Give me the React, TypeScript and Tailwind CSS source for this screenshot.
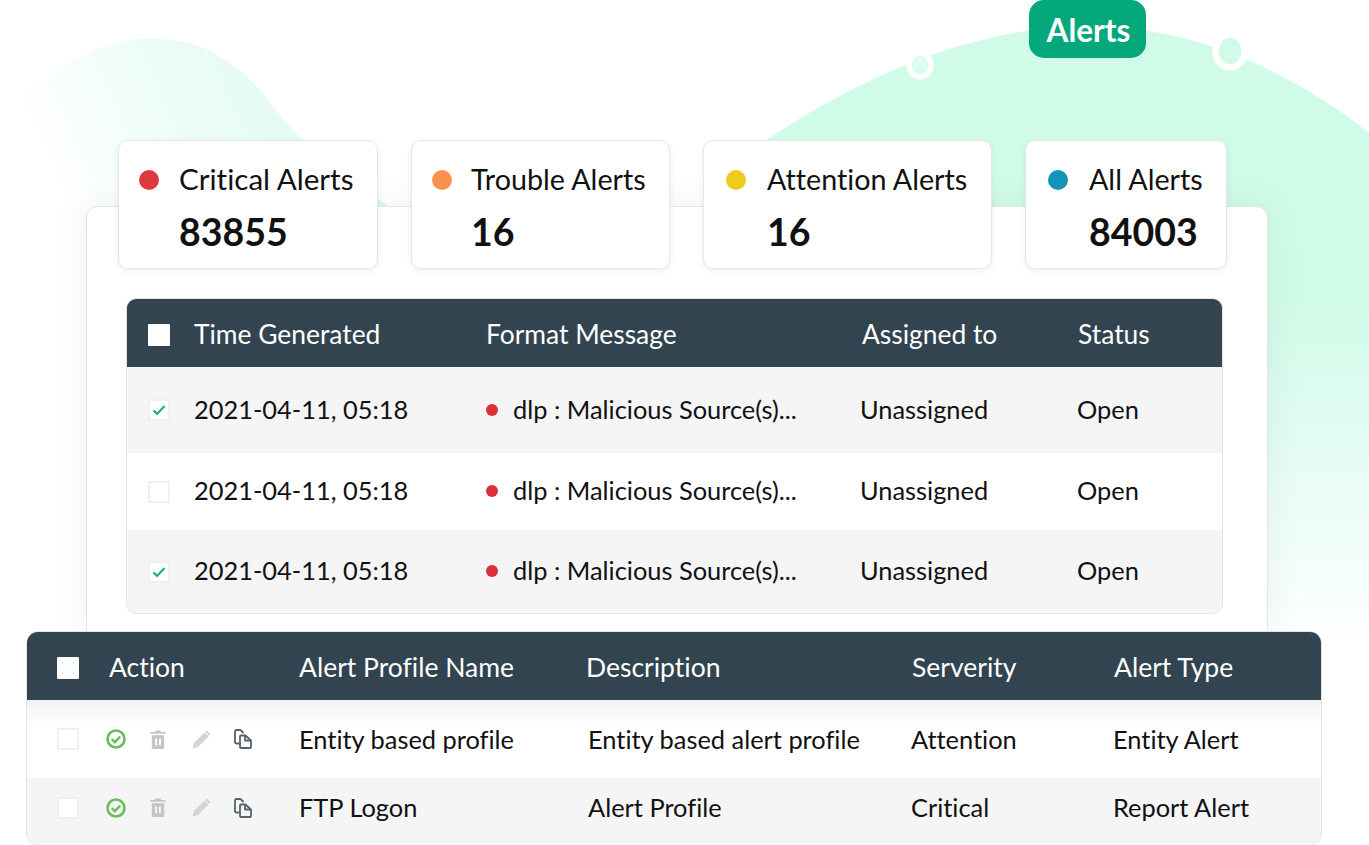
const statCards = [
  { label: "Critical Alerts", value: "83855", dot: "bg-[#dc3a3e]", width: "w-[260px]", pad: "pl-[20px]", gap: "gap-[20px]", size: "text-[29.6px]" },
  { label: "Trouble Alerts", value: "16", dot: "bg-[#fb914f]", width: "w-[259px]", pad: "pl-[20px]", gap: "gap-[19px]", size: "text-[28.7px]" },
  { label: "Attention Alerts", value: "16", dot: "bg-[#efcb20]", width: "w-[289px]", pad: "pl-[22px]", gap: "gap-[21px]", size: "text-[28.7px]" },
  { label: "All Alerts", value: "84003", dot: "bg-[#1294b8]", width: "w-[202px]", pad: "pl-[22px]", gap: "gap-[21px]", size: "text-[28.7px]" },
];

const alertRows = [
  { checked: true, bg: "bg-[#f5f5f5]", height: "h-[86px]" },
  { checked: false, bg: "bg-white", height: "h-[77px]" },
  { checked: true, bg: "bg-[#f5f5f5]", height: "h-[83px]" },
];

const profileRows = [
  { name: "Entity based profile", desc: "Entity based alert profile", severity: "Attention", type: "Entity Alert", bg: "bg-[linear-gradient(#f1f1f1,#ffffff_32%)]", height: "h-[78px]" },
  { name: "FTP Logon", desc: "Alert Profile", severity: "Critical", type: "Report Alert", bg: "bg-[#f5f5f5] pb-[8px]", height: "h-[67px]" },
];

const CheckCircleIcon = () => (
  <svg width="20" height="20" viewBox="0 0 20 20" fill="none" stroke="#6cbb5e">
    <circle cx="10" cy="10" r="8.5" strokeWidth="2.6" />
    <path d="M5.8 10.2l3 3 5.4-5.6" strokeWidth="2.4" />
  </svg>
);

const TrashIcon = () => (
  <svg width="16" height="19" viewBox="0 0 16 20" fill="#c4c6c6">
    <path d="M5.5 0.5h5l.6 1.5H16v2H0V2h4.9z" />
    <path d="M1.5 5.5h13V19a1 1 0 0 1-1 1h-11a1 1 0 0 1-1-1zM5 9v7h2V9zm4 0v7h2V9z" fillRule="evenodd" />
  </svg>
);

const PencilIcon = () => (
  <svg width="19" height="19" viewBox="0 0 19 19" fill="#d2d4d4">
    <path d="M0.5 18.5l1.5-5.5L12.5 2.5l4 4L6 17z" />
    <path d="M14 1l1-.6 3.5 3.5-.6 1.2-1 .6-3.9-3.9z" />
  </svg>
);

const CopyIcon = () => (
  <svg width="18" height="20" viewBox="0 0 18 20" fill="none" stroke="#54636c" strokeWidth="1.8" strokeLinejoin="round">
    <path d="M5 14.5H2.5a1.5 1.5 0 0 1-1.5-1.5V2.5A1.5 1.5 0 0 1 2.5 1h4l3 3" />
    <path d="M6 7.5a1 1 0 0 1 1-1h4.5L17 11.5v6.5a1 1 0 0 1-1 1H7a1 1 0 0 1-1-1z" />
    <path d="M11 6.5v5h6" />
  </svg>
);

const TickIcon = () => (
  <svg width="14" height="12" viewBox="0 0 14 12" fill="none" stroke="#1fb466" strokeWidth="2.2">
    <path d="M1.5 6.5l3.6 3.4 7.4-8" />
  </svg>
);

const Backdrop = () => (
  <svg className="absolute left-0 top-0" width="1369" height="845" viewBox="0 0 1369 845">
    <defs>
      <linearGradient id="leftBlob" x1="0.85" y1="0.2" x2="0" y2="0.45">
        <stop offset="0" stopColor="#dffbee" />
        <stop offset="0.5" stopColor="#eefdf7" />
        <stop offset="0.9" stopColor="#ffffff" />
      </linearGradient>
      <linearGradient id="hill" x1="0" y1="0" x2="0" y2="1">
        <stop offset="0" stopColor="#d1fbe9" />
        <stop offset="0.45" stopColor="#d1fbe9" />
        <stop offset="1" stopColor="#ffffff" />
      </linearGradient>
    </defs>
    <path d="M0 125C30 85 90 38 150 38C205 38 240 65 268 100C285 122 320 165 395 210L395 300L0 300Z" fill="url(#leftBlob)" />
    <path d="M745 155C850 80 970 26 1090 26C1190 26 1290 70 1369 133L1369 650L745 650Z" fill="url(#hill)" />
    <ellipse cx="920" cy="65" rx="11" ry="12" fill="#dcfcef" stroke="white" strokeWidth="5" />
    <ellipse cx="1230" cy="51" rx="14.5" ry="16.5" fill="#d1fbe9" stroke="white" strokeWidth="6.5" />
  </svg>
);

const TableHeadBox = () => <span className="block w-[22px] h-[22px] bg-white rounded-[1px]" />;

const RowBox = ({ checked }: { checked?: boolean }) => (
  <span className="flex items-center justify-center w-[22px] h-[22px] bg-white border-2 border-[#f0f0f0]">
    {checked && <TickIcon />}
  </span>
);

const App = () => {
  return (
    <div className="relative w-[1369px] h-[845px] overflow-hidden bg-white font-['Lato','Noto_Sans',sans-serif] [font-variant-ligatures:none] text-[#111]">
      <Backdrop />

      <div className="relative pt-[140px]">
        {/* stat cards sit over the top edge of the panel */}
        <div className="relative z-10 flex gap-[33px] ml-[118px]">
          {statCards.map((card) => (
            <div
              key={card.label}
              className={`${card.width} ${card.pad} ${card.gap} h-[129px] flex bg-white border border-[#e6e8e8] rounded-[10px] shadow-[0_2px_6px_rgba(0,0,0,0.07)]`}
            >
              <span className={`${card.dot} w-[20px] h-[20px] rounded-full mt-[29px] shrink-0`} />
              <div>
                <div className={`${card.size} mt-[19px] leading-[38px]`}>{card.label}</div>
                <div className="mt-[12px] text-[37.5px] leading-[44px] font-bold">{card.value}</div>
              </div>
            </div>
          ))}
        </div>

        <div className="-mt-[63px] ml-[86px] w-[1182px] h-[434px] pt-[91px] pl-[39px] bg-white border border-[#e2e6e6] rounded-[12px] shadow-[0_0_40px_rgba(0,0,0,0.06)]">
          <div className="w-[1097px] border border-[#e4e6e6] rounded-[10px] overflow-hidden">
            <div className="grid grid-cols-[67px_292px_376px_216px_1fr] items-center h-[68px] pt-[4px] bg-[#32444f] text-white text-[26.4px]">
              <span className="pl-[21px]"><TableHeadBox /></span>
              <span>Time Generated</span>
              <span>Format Message</span>
              <span>Assigned to</span>
              <span>Status</span>
            </div>
            {alertRows.map((row, i) => (
              <div key={i} className={`${row.bg} ${row.height} grid grid-cols-[67px_292px_376px_216px_1fr] items-center text-[25.4px]`}>
                <span className="pl-[21px]"><RowBox checked={row.checked} /></span>
                <span className="pb-[2px]">2021-04-11, 05:18</span>
                <span className="flex items-center gap-[15px]">
                  <span className="w-[12px] h-[12px] rounded-full bg-[#dc2f38]" />
                  <span className="pb-[2px]">dlp : Malicious Source(s)...</span>
                </span>
                <span className="-ml-[2px] pb-[2px]">Unassigned</span>
                <span className="-ml-[1px] pb-[2px]">Open</span>
              </div>
            ))}
          </div>
        </div>

        <div className="relative z-10 -mt-[9px] ml-[26px] w-[1296px] border border-[#e4e6e6] rounded-[12px] overflow-hidden bg-white">
          <div className="grid grid-cols-[82px_190px_287px_326px_202px_1fr] items-center h-[68px] pt-[4px] bg-[#32444f] text-white text-[26.5px]">
            <span className="pl-[30px]"><TableHeadBox /></span>
            <span>Action</span>
            <span>Alert Profile Name</span>
            <span>Description</span>
            <span>Serverity</span>
            <span>Alert Type</span>
          </div>
          {profileRows.map((row) => (
            <div key={row.name} className={`${row.bg} ${row.height} grid grid-cols-[82px_190px_287px_326px_202px_1fr] items-center text-[25.4px]`}>
              <span className="pl-[30px]"><RowBox /></span>
              <span className="flex items-center -ml-[3px]">
                <CheckCircleIcon />
                <span className="ml-[24px] flex"><TrashIcon /></span>
                <span className="ml-[26px] flex"><PencilIcon /></span>
                <span className="ml-[23px] flex"><CopyIcon /></span>
              </span>
              <span>{row.name}</span>
              <span className="ml-[2px]">{row.desc}</span>
              <span className="-ml-[1px]">{row.severity}</span>
              <span className="-ml-[1px]">{row.type}</span>
            </div>
          ))}
        </div>
      </div>

      <div className="absolute left-[1029px] top-0 w-[117px] h-[58px] pt-[3px] pl-[2px] flex items-center justify-center rounded-[15px] bg-[#04a87b] text-white text-[31.5px] font-bold">
        Alerts
      </div>
    </div>
  );
};

export default App;
